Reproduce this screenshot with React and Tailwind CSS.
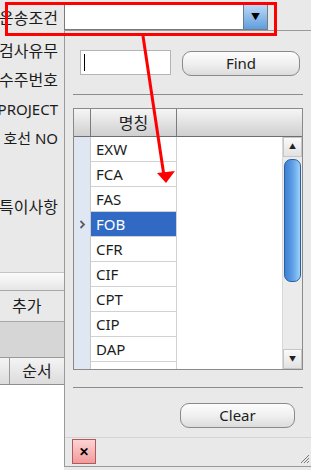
import React from 'react';

const codes = ['EXW', 'FCA', 'FAS', 'FOB', 'CFR', 'CIF', 'CPT', 'CIP', 'DAP', 'DDP'];

function Label({ h, children, className = '' }) {
  return (
    <div className={`flex items-center justify-end pr-[6px] whitespace-nowrap ${className}`} style={{ height: h }}>
      {children}
    </div>
  );
}

export default function App() {
  return (
    <div
      className="relative w-[311px] h-[470px] overflow-hidden bg-[#e9e9e9] text-[15px] text-[#1c1c1c] flex"
      style={{ fontFamily: '"Noto Sans", "Noto Sans CJK KR", sans-serif' }}
    >
      {/* left form column */}
      <div className="w-[64px] shrink-0 flex flex-col">
        <div className="overflow-hidden">
          <Label h={36} className="text-[16px]">운송조건</Label>
          <Label h={29} className="text-[16px]">검사유무</Label>
          <Label h={29} className="text-[16px]">수주번호</Label>
          <Label h={31}>PROJECT</Label>
          <Label h={27}>호선 NO</Label>
        </div>
        <div className="h-[120px] pt-[43px] flex justify-end pr-[6px] whitespace-nowrap text-[16px]">특이사항</div>
        <div className="h-[18px] border-t border-[#c4c4c4] bg-gradient-to-b from-[#fbfbfb] to-[#e6e6e6]" />
        <div className="h-[32px] border-t border-b border-[#a8a8a8] flex items-center pl-[12px] text-[16px]">추가</div>
        <div className="h-[36px] bg-[#d6d6d6] border-b border-[#9a9a9a]" />
        <div className="h-[27px] flex border-b border-[#8e8e8e] bg-gradient-to-b from-[#f4f4f4] to-[#dcdcdc]">
          <div className="w-[10px] border-r border-[#9a9a9a]" />
          <div className="flex-1 flex items-center justify-center text-[16px]">순서</div>
        </div>
        <div className="flex-1 bg-white" />
      </div>

      {/* right: combo + dropdown panel */}
      <div className="flex-1 flex flex-col">
        <div className="h-[30px] pt-[4px]">
          <div className="w-[204px] h-[26px] bg-white border border-[#7a7a7a] flex justify-end">
            <div className="w-[24px] h-full border-l border-[#6a7a90] bg-gradient-to-b from-[#bcd9f6] to-[#5f9ddd] flex items-center justify-center text-[9px] text-black">
              ▼
            </div>
          </div>
        </div>

        <div className="h-[437px] border-t border-l border-b border-[#9a9a9a] flex flex-col">
          {/* search row */}
          <div className="flex items-start pt-[19px] pl-[15px] gap-[11px]">
            <div className="w-[91px] h-[25px] bg-white border border-[#b4b4b4] flex items-center pl-[3px]">
              <div className="w-px h-[17px] bg-black" />
            </div>
            <div className="mt-px w-[118px] h-[25px] rounded-[9px] border border-[#8a8a8a] bg-gradient-to-b from-[#fdfdfd] via-[#f0f0f0] to-[#dcdcdc] flex items-center justify-center">
              Find
            </div>
          </div>

          <div className="mx-[8px] mt-[18px] h-px bg-[#8c8c8c]" />

          {/* grid */}
          <div className="mx-[8px] mt-[13px] h-[262px] border border-[#8a8a8a] flex flex-col bg-white overflow-hidden">
            <div className="h-[28px] shrink-0 flex border-b border-[#6e6e6e] bg-gradient-to-b from-[#f6f6f6] to-[#cfcfcf]">
              <div className="w-[17px] border-r border-[#7c7c7c]" />
              <div className="w-[86px] border-r border-[#7c7c7c] flex items-center justify-center text-[16px]">명칭</div>
              <div className="flex-1" />
            </div>
            <div className="flex-1 flex min-h-0">
              <div className="flex-1 flex flex-col overflow-hidden">
                {codes.map((c) => {
                  const sel = c === 'FOB';
                  return (
                    <div key={c} className="h-[25px] shrink-0 flex">
                      <div className="w-[17px] bg-[#dfe7f3] border-r border-[#c9c9c9] flex items-center justify-center">
                        {sel && (
                          <svg width="7" height="9" viewBox="0 0 7 9">
                            <path d="M1.5 1 L5 4.5 L1.5 8" fill="none" stroke="#5a5f66" strokeWidth="1.8" />
                          </svg>
                        )}
                      </div>
                      <div
                        className={`w-[86px] border-r border-b border-[#d2d2d2] flex items-center pl-[5px] ${
                          sel ? 'bg-[#316ac5] text-white' : 'bg-white'
                        }`}
                      >
                        {c}
                      </div>
                    </div>
                  );
                })}
              </div>
              {/* scrollbar */}
              <div className="w-[20px] shrink-0 bg-[#ebebeb] border-l border-[#d8d8d8] flex flex-col">
                <div className="h-[20px] border border-[#c6c6c6] bg-gradient-to-b from-[#fafafa] to-[#e2e2e2] flex items-center justify-center text-[7px] text-[#222]">
                  ▲
                </div>
                <div className="mx-px mt-[2px] h-[123px] rounded-[7px] border border-[#2d5f9e] bg-gradient-to-r from-[#3f7fd3] via-[#5e9fe6] to-[#9bd0f8]" />
                <div className="flex-1" />
                <div className="h-[20px] border border-[#c6c6c6] bg-gradient-to-b from-[#fafafa] to-[#e2e2e2] flex items-center justify-center text-[7px] text-[#222]">
                  ▼
                </div>
              </div>
            </div>
          </div>

          <div className="mx-[8px] mt-[17px] h-px bg-[#8c8c8c]" />

          <div className="flex justify-end pr-[16px] mt-[15px]">
            <div className="w-[115px] h-[25px] rounded-[9px] border border-[#8a8a8a] bg-gradient-to-b from-[#fdfdfd] via-[#f0f0f0] to-[#dcdcdc] flex items-center justify-center">
              Clear
            </div>
          </div>

          <div className="mt-[9px] h-px bg-[#d4d4d4]" />

          <div className="flex-1 flex items-end justify-between pl-[7px] pb-px">
            <div className="mb-px w-[24px] h-[25px] border border-[#b05a5a] bg-gradient-to-b from-[#fbd4d4] to-[#f19a9a] flex items-center justify-center text-[12px] font-bold text-black leading-none">
              ✕
            </div>
            <svg width="12" height="12" viewBox="0 0 12 12" className="mb-[1px] mr-[1px]">
              <path d="M11 3 L3 11 M11 6 L6 11 M11 9 L9 11" stroke="#7a7a7a" strokeWidth="1" />
            </svg>
          </div>
        </div>
      </div>

      {/* red highlight overlay */}
      <div className="absolute left-[5px] top-[2px] w-[272px] h-[34px] border-[3px] border-[#ff0000] pointer-events-none" />
      <svg className="absolute left-0 top-0 pointer-events-none" width="311" height="470">
        <line x1="143" y1="36" x2="164" y2="176" stroke="#ff0000" strokeWidth="3" />
        <polygon points="157,173 175,171 166,183" fill="#ff0000" />
      </svg>
    </div>
  );
}
